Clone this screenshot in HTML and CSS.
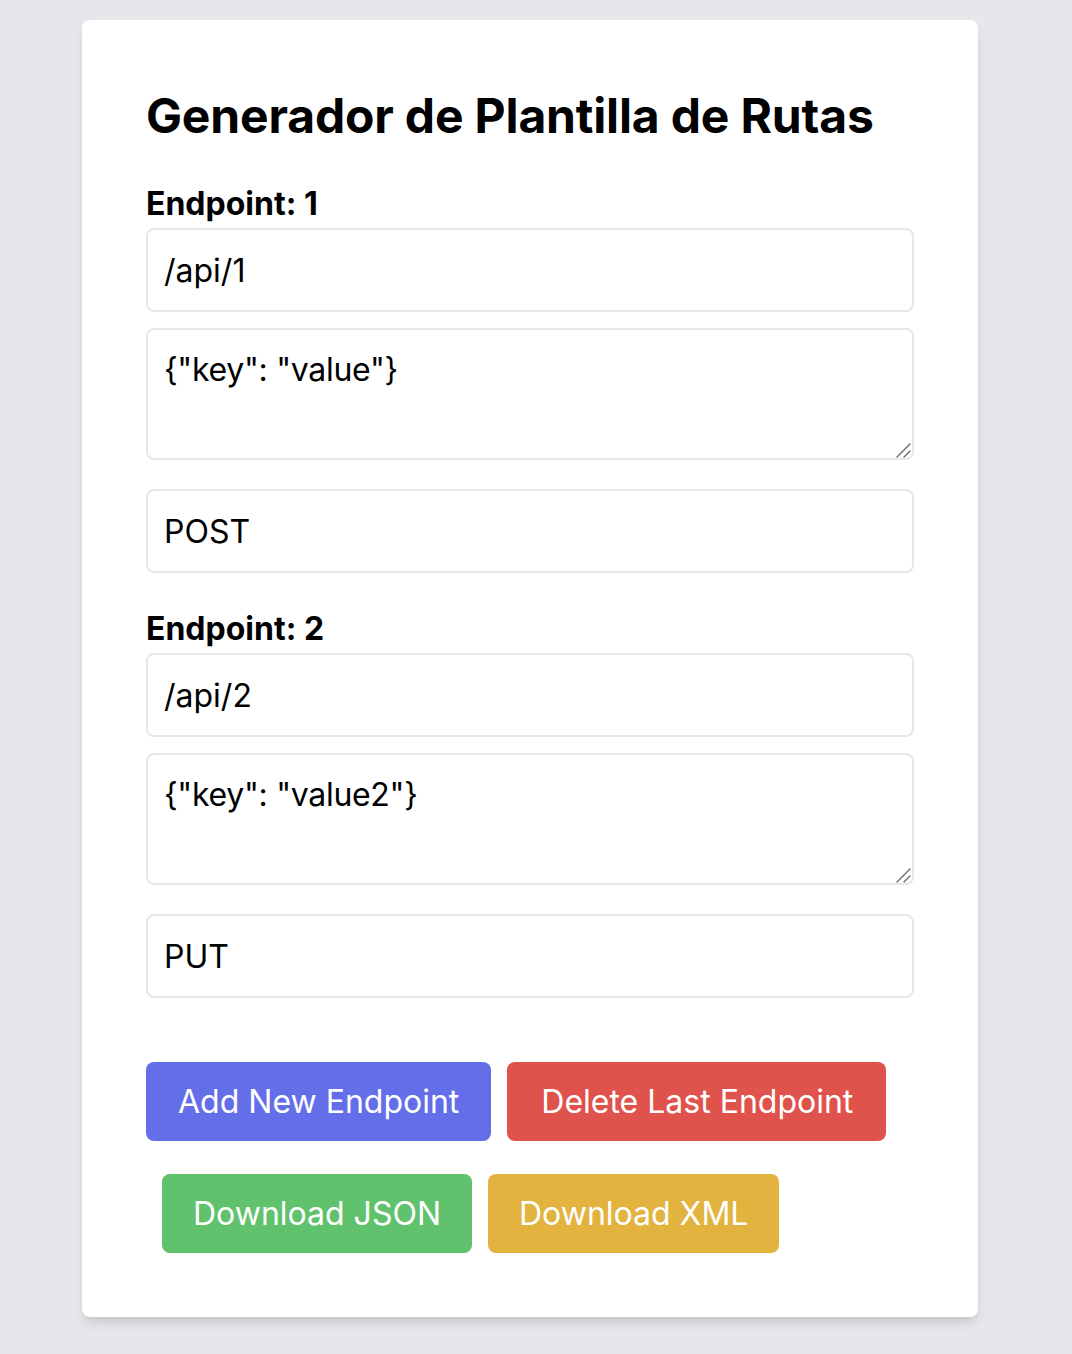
FILE: index.html
```html
<!DOCTYPE html>
<html lang="es">
<head>
<meta charset="utf-8">
<title>Generador de Plantilla de Rutas</title>
<link rel="stylesheet" href="styles.css">
</head>
<body>
<main class="card">
  <h1 class="title">Generador de Plantilla de Rutas</h1>

  <section class="endpoint">
    <label class="label">Endpoint: 1</label>
    <input class="field" type="text" value="/api/1">
    <div class="area-wrap">
      <textarea class="field area" rows="2">{"key": "value"}</textarea>
      <svg class="grip" width="16" height="16" viewBox="0 0 16 16" aria-hidden="true"><path d="M2 15 L15 2 M9 15 L15 9" stroke="#6b6b6b" stroke-width="1.4" fill="none" stroke-linecap="round"/></svg>
    </div>
    <input class="field method" type="text" value="POST">
  </section>

  <section class="endpoint">
    <label class="label">Endpoint: 2</label>
    <input class="field" type="text" value="/api/2">
    <div class="area-wrap">
      <textarea class="field area" rows="2">{"key": "value2"}</textarea>
      <svg class="grip" width="16" height="16" viewBox="0 0 16 16" aria-hidden="true"><path d="M2 15 L15 2 M9 15 L15 9" stroke="#6b6b6b" stroke-width="1.4" fill="none" stroke-linecap="round"/></svg>
    </div>
    <input class="field method" type="text" value="PUT">
  </section>

  <div class="actions">
    <button class="btn btn-add">Add New Endpoint</button>
    <button class="btn btn-delete">Delete Last Endpoint</button>
  </div>
  <div class="actions downloads">
    <button class="btn btn-json">Download JSON</button>
    <button class="btn btn-xml">Download XML</button>
  </div>
</main>
</body>
</html>
```

FILE: styles.css
```css
* { box-sizing: border-box; }

html, body {
  margin: 0;
  padding: 0;
}

body {
  background: #e5e7eb;
  font-family: Inter, "Noto Sans", "Liberation Sans", sans-serif;
  color: #000;
  min-height: 1354px;
  padding-top: 20px;
}

.card {
  width: 896px;
  margin-left: 82px;
  background: #ffffff;
  border-radius: 8px;
  padding: 64px;
  box-shadow: 0 8px 12px -2px rgba(0, 0, 0, 0.1), 0 4px 8px -4px rgba(0, 0, 0, 0.1);
}

.title {
  margin: 0 0 32px 0;
  font-size: 48px;
  line-height: 64px;
  font-weight: 700;
  letter-spacing: -0.16px;
}

.endpoint {
  margin-bottom: 32px;
}

.label {
  display: block;
  font-size: 32px;
  line-height: 48px;
  font-weight: 700;
}

.field {
  display: block;
  width: 100%;
  margin: 0 0 16px 0;
  padding: 16px;
  border: 2px solid #e5e7eb;
  border-radius: 8px;
  font-family: Inter, "Noto Sans", "Liberation Sans", sans-serif;
  font-size: 32px;
  line-height: 48px;
  color: #000;
  background: #fff;
  outline: none;
}

input.field {
  height: 84px;
}

.area-wrap {
  position: relative;
  margin-bottom: 29px;
}

.area {
  height: 132px;
  margin-bottom: 0;
  resize: none;
  letter-spacing: -0.3px;
}

.grip {
  position: absolute;
  right: 3px;
  bottom: 2px;
}

.method {
  margin-bottom: 0;
}

.actions {
  display: flex;
  gap: 16px;
  margin-top: 64px;
}

.downloads {
  margin-top: 33px;
  padding-left: 16px;
}

.btn {
  border: none;
  border-radius: 8px;
  padding: 16px 32px;
  height: 79px;
  font-family: Inter, "Noto Sans", "Liberation Sans", sans-serif;
  font-size: 32px;
  line-height: 48px;
  color: #ffffff;
  cursor: pointer;
}

.btn-add { background: #646ee9; }
.btn-delete { background: #df534c; padding: 16px 33px 16px 34px; }
.btn-json { background: #60c26c; padding: 16px 31px; }
.btn-xml { background: #e2b33f; padding: 16px 31px; }
```
